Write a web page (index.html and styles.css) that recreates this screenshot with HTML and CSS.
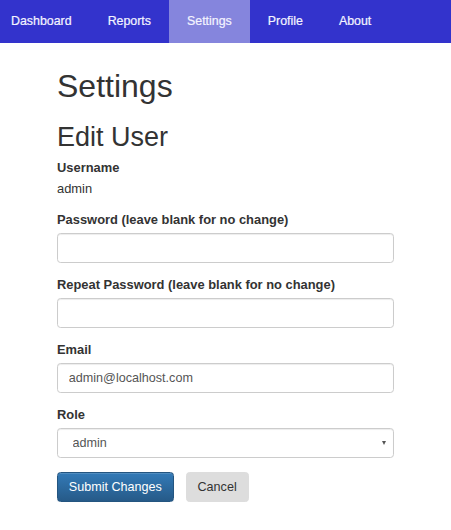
FILE: index.html
```html
<!DOCTYPE html>
<html lang="en">
<head>
<meta charset="utf-8">
<title>Settings</title>
<link rel="stylesheet" href="styles.css">
</head>
<body>
<nav class="navbar">
  <a class="nav-link" href="#">Dashboard</a>
  <a class="nav-link" href="#">Reports</a>
  <a class="nav-link active" href="#">Settings</a>
  <a class="nav-link" href="#">Profile</a>
  <a class="nav-link" href="#">About</a>
</nav>
<main class="container">
  <h1 class="page-title">Settings</h1>
  <h2 class="section-title">Edit User</h2>
  <form class="form">
    <div class="form-group">
      <label class="label">Username</label>
      <div class="static">admin</div>
    </div>
    <div class="form-group">
      <label class="label">Password (leave blank for no change)</label>
      <input class="form-control" type="password">
    </div>
    <div class="form-group">
      <label class="label">Repeat Password (leave blank for no change)</label>
      <input class="form-control" type="password">
    </div>
    <div class="form-group">
      <label class="label">Email</label>
      <input class="form-control" type="text" value="admin@localhost.com">
    </div>
    <div class="form-group last">
      <label class="label">Role</label>
      <div class="select-wrap">
        <select class="form-control select">
          <option>admin</option>
          <option>user</option>
        </select>
        <span class="caret"></span>
      </div>
    </div>
    <div class="actions">
      <button type="button" class="btn btn-primary">Submit Changes</button>
      <button type="button" class="btn btn-default">Cancel</button>
    </div>
  </form>
</main>
</body>
</html>
```

FILE: styles.css
```css
html, body {
  margin: 0;
  padding: 0;
  background: #ffffff;
  font-family: "Liberation Sans", Arial, sans-serif;
  font-size: 12.6px;
  color: #333333;
}

.navbar {
  display: flex;
  height: 43px;
  background: #3333cc;
}

.nav-link {
  display: block;
  padding: 0 18px;
  line-height: 43px;
  font-size: 12.4px;
  color: #f4f4ff;
  text-decoration: none;
  -webkit-text-stroke: 0.2px #f4f4ff;
}

.nav-link:first-child {
  margin-left: -7px;
}

.nav-link.active {
  background: #8585dd;
}

.container {
  width: 337px;
  padding-left: 57px;
}

.page-title {
  margin: 26px 0 0;
  font-size: 32px;
  line-height: 34px;
  font-weight: normal;
  color: #333333;
}

.section-title {
  margin: 19px 0 7px;
  font-size: 27px;
  line-height: 30px;
  font-weight: normal;
  color: #333333;
}

.form {
  margin: 0;
}

.form-group {
  display: flex;
  flex-direction: column;
  margin-bottom: 13px;
}

.form-group.last {
  margin-bottom: 14px;
}

.label {
  display: block;
  font-size: 12.9px;
  font-weight: bold;
  line-height: 18px;
  margin-bottom: 4px;
}

.static {
  font-size: 12.9px;
  line-height: 18px;
  margin-top: -1px;
}

.form-control {
  box-sizing: border-box;
  display: block;
  width: 100%;
  height: 30px;
  margin: 0;
  padding: 5px 10.8px;
  font-family: "Liberation Sans", Arial, sans-serif;
  font-size: 12.6px;
  color: #555555;
  background: #ffffff;
  border: 1px solid #cccccc;
  border-radius: 3.6px;
  box-shadow: inset 0 1px 1px rgba(0, 0, 0, 0.075);
  outline: none;
}

.select-wrap {
  position: relative;
}

.select {
  appearance: none;
  -webkit-appearance: none;
  padding-left: 14.5px;
}

.caret {
  position: absolute;
  right: 8px;
  top: 13px;
  width: 0;
  height: 0;
  border-left: 2.5px solid transparent;
  border-right: 2.5px solid transparent;
  border-top: 4px solid #555555;
}

.actions {
  display: flex;
  gap: 12px;
}

.btn {
  box-sizing: border-box;
  height: 30px;
  padding: 0 10.8px;
  font-family: "Liberation Sans", Arial, sans-serif;
  font-size: 12.6px;
  line-height: 28px;
  border-radius: 3.6px;
  border: 1px solid transparent;
  cursor: pointer;
}

.btn-primary {
  color: #ffffff;
  background: linear-gradient(to bottom, #337ab7 0%, #265a88 100%);
  border-color: #245580;
  box-shadow: inset 0 1px 0 rgba(255, 255, 255, 0.15), 0 1px 1px rgba(0, 0, 0, 0.075);
}

.btn-default {
  color: #333333;
  background: #dddddd;
  border-color: #dddddd;
}
```
